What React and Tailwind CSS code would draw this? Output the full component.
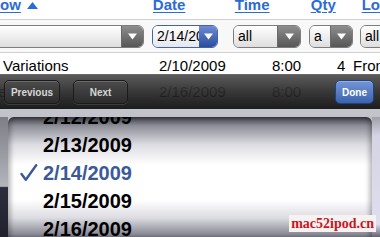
import React from "react";

const Arrow = ({ color = "white" }) => (
  <svg width="9" height="7" viewBox="0 0 9 7">
    <path d="M0 0.5H9L4.5 6.5Z" fill={color} />
  </svg>
);

function Select({ className = "", text, arrowW = "w-[22px]" }) {
  return (
    <div
      className={`flex h-[23px] rounded-[6px] border border-[#7d7d7d] overflow-hidden shrink-0 ${className}`}
    >
      <div className="flex-1 min-w-0 bg-gradient-to-b from-white to-[#dedede] text-[14px] leading-[21px] pl-[4px] text-black whitespace-nowrap overflow-hidden">
        {text}
      </div>
      <div
        className={`${arrowW} shrink-0 border-l border-[#6a6a6a] bg-gradient-to-b from-[#8e8e8e] to-[#565656] flex items-center justify-center`}
      >
        <Arrow />
      </div>
    </div>
  );
}

const dates = ["2/12/2009", "2/13/2009", "2/14/2009", "2/15/2009", "2/16/2009"];

export default function App() {
  return (
    <div className="relative w-[380px] h-[237px] overflow-hidden bg-white font-['Liberation_Sans',Arial,sans-serif]">
      {/* header row */}
      <div className="h-[20px] border-b border-[#cfcfcf] overflow-hidden">
        <div className="flex -mt-[3px] text-[15px] leading-[15px] font-bold text-[#2c6bd3] whitespace-nowrap">
          <div className="w-[153px] flex items-start">
            <span className="underline underline-offset-[2px]">ow</span>
            <span className="ml-[6px] mt-[5px]">
              <svg width="11" height="7" viewBox="0 0 11 7">
                <path d="M5.5 0L11 7H0Z" fill="#2c6bd3" />
              </svg>
            </span>
          </div>
          <div className="w-[82px]">
            <span className="underline underline-offset-[2px]">Date</span>
          </div>
          <div className="w-[76px]">
            <span className="underline underline-offset-[2px]">Time</span>
          </div>
          <div className="w-[51px]">
            <span className="underline underline-offset-[2px]">Qty</span>
          </div>
          <div>
            <span className="underline underline-offset-[2px]">Lo</span>
          </div>
        </div>
      </div>

      {/* filter row */}
      <div className="h-[33px] border-b border-[#cfcfcf] bg-[#f8f8f8] flex items-center whitespace-nowrap">
        <Select className="-ml-[10px] w-[154px]" text="" />
        <div className="ml-[8px] w-[66px] h-[23px] rounded-[6px] border-[1.5px] border-[#4462ad] flex overflow-hidden shrink-0">
          <div className="flex-1 min-w-0 bg-gradient-to-b from-white to-[#e6e6ee] text-[14px] leading-[20px] pl-[4px] overflow-hidden whitespace-nowrap">
            2/14/2009
          </div>
          <div className="w-[18px] shrink-0 bg-gradient-to-b from-[#6d8bd6] to-[#2c4d9e] flex items-center justify-center">
            <Arrow />
          </div>
        </div>
        <Select className="ml-[15px] w-[68px]" text="all" arrowW="w-[23px]" />
        <Select className="ml-[8px] w-[44px]" text="a" />
        <Select className="ml-[7px] w-[60px]" text="all" />
      </div>

      {/* data rows */}
      <div className="flex h-[26px] items-center text-[15px] leading-[26px] text-black whitespace-nowrap">
        <div className="w-[159px] shrink-0 pl-[3px]">Variations</div>
        <div className="w-[113px] shrink-0">2/10/2009</div>
        <div className="w-[65px] shrink-0">8:00</div>
        <div className="w-[16px] shrink-0">4</div>
        <div className="shrink-0">From</div>
      </div>
      <div className="flex h-[26px] items-center text-[15px] leading-[26px] text-black whitespace-nowrap">
        <div className="w-[159px] shrink-0 overflow-hidden">
          <span className="block -ml-[2px]">e</span>
        </div>
        <div className="w-[113px] shrink-0">2/16/2009</div>
        <div className="w-[65px] shrink-0">8:00</div>
      </div>

      {/* bottom overlay: toolbar + picker */}
      <div className="absolute left-0 right-0 top-[74px] bottom-0 flex flex-col">
        <div className="h-[35px] shrink-0 flex items-center px-[4px] border-t border-[rgba(110,110,110,0.95)] bg-[linear-gradient(to_bottom,rgba(78,78,78,0.93)_0%,rgba(40,40,40,0.93)_50%,rgba(16,16,16,0.95)_100%)]">
          <button className="w-[56px] h-[24px] rounded-[5px] border border-[#1b1b1b] bg-gradient-to-b from-[#4c4c4c] to-[#2c2c2c] shadow-[inset_0_1px_0_rgba(255,255,255,0.18),0_1px_0_rgba(255,255,255,0.12)] text-[10px] font-bold text-[#d6d6d6]">
            Previous
          </button>
          <button className="ml-[13px] w-[55px] h-[24px] rounded-[5px] border border-[#1b1b1b] bg-gradient-to-b from-[#4c4c4c] to-[#2c2c2c] shadow-[inset_0_1px_0_rgba(255,255,255,0.18),0_1px_0_rgba(255,255,255,0.12)] text-[10px] font-bold text-[#d6d6d6]">
            Next
          </button>
          <button className="ml-auto mr-[2px] w-[39px] h-[24px] rounded-[5px] border border-[#23427e] bg-gradient-to-b from-[#7496d6] to-[#3a63ae] shadow-[inset_0_1px_0_rgba(255,255,255,0.25)] text-[10px] font-bold text-white">
            Done
          </button>
        </div>

        <div className="flex-1 flex flex-col bg-gradient-to-b from-[#c4c4cc] to-[#9a9aa4]">
          <div className="h-[8px] shrink-0" />
          <div className="flex-1 flex">
            <div className="w-[8px] shrink-0 bg-[linear-gradient(to_bottom,#7e7e86_0%,#b4b4bc_55%,#2c2c3c_56%,#20202c_100%)]" />
            <div className="flex-1 relative overflow-hidden rounded-t-[6px] bg-[linear-gradient(to_bottom,#3e3e46_0%,#8e8e98_7%,#dcdce2_22%,#ffffff_38%,#ffffff_66%,#dcdce2_80%,#8a8a96_93%,#2a2a34_100%)] shadow-[inset_3px_0_4px_rgba(0,0,0,0.25),inset_-3px_0_4px_rgba(0,0,0,0.25)]">
              <div className="-mt-[14px] flex flex-col">
                {dates.map((d, i) => (
                  <div
                    key={d}
                    className={`h-[28px] flex items-center text-[20px] leading-[28px] font-bold ${
                      i === 2 ? "text-[#3b5998]" : "text-black"
                    }`}
                  >
                    <div className="w-[35px] flex justify-end">
                      {i === 2 && (
                        <svg width="18" height="18" viewBox="0 0 18 18" className="mr-[5px]">
                          <path
                            d="M1.5 10L5.8 15.8L16.2 1.2"
                            fill="none"
                            stroke="#3b5998"
                            strokeWidth="2.4"
                            strokeLinecap="round"
                            strokeLinejoin="round"
                          />
                        </svg>
                      )}
                    </div>
                    <span>{d}</span>
                  </div>
                ))}
              </div>
            </div>
            <div className="w-[8px] shrink-0 bg-[linear-gradient(to_bottom,#a0a0aa_0%,#d4d4e4_15%,#dedef0_85%,#2a2a32_100%)]" />
          </div>
        </div>
      </div>

      {/* watermark */}
      <div className="absolute right-[4px] bottom-[5px] h-[17px] px-[2px] bg-[#f6f2f2] text-[14px] leading-[17px] font-bold text-[#c8161d] font-['Liberation_Serif','Times_New_Roman',serif]">
        mac52ipod.cn
      </div>
    </div>
  );
}
